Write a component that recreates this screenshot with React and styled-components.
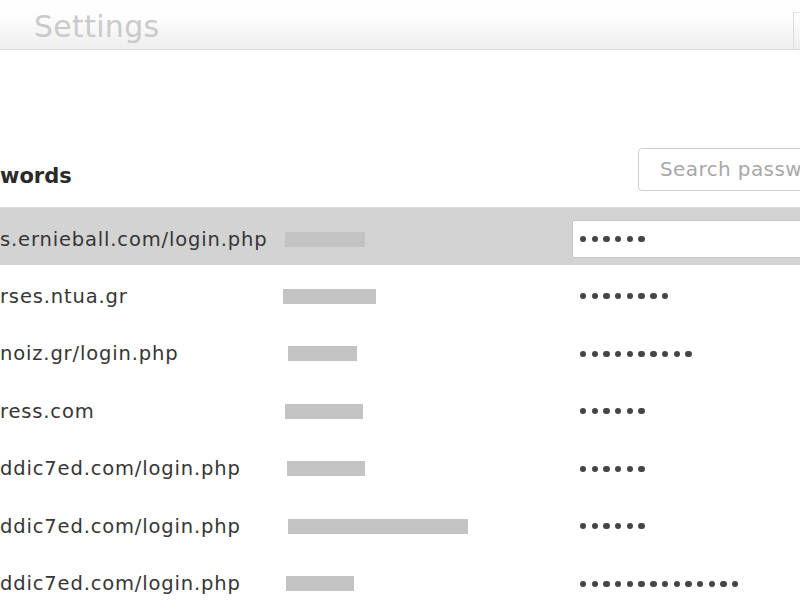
import React from 'react';
import styled, { createGlobalStyle } from 'styled-components';

const GlobalStyle = createGlobalStyle`
    html, body {
        margin: 0;
        padding: 0;
        background: #FFFFFF;
    }
    body {
        font-family: 'DejaVu Sans', 'Liberation Sans', sans-serif;
        color: #333333;
    }
`;

const Page = styled.div`
    width: 800px;
    height: 600px;
    overflow: hidden;
    background: #FFFFFF;
    display: flex;
    flex-direction: column;
`;

const Header = styled.header`
    height: 49px;
    flex: 0 0 49px;
    display: flex;
    align-items: flex-end;
    justify-content: space-between;
    background: linear-gradient(to bottom, #FFFFFF 0%, #FDFDFD 35%, #EEEEEE 100%);
    border-bottom: 1px solid #DCDCDC;
`;

const Title = styled.h1`
    margin: 0 0 5px 34px;
    font-size: 30px;
    font-weight: normal;
    letter-spacing: 0.3px;
    color: #CACACA;
`;

const Corner = styled.div`
    width: 6px;
    height: 36px;
    border-left: 1px solid #DDDDDD;
    border-top: 1px solid #E8E8E8;
`;

const Content = styled.main`
    padding-top: 97px;
    display: flex;
    flex-direction: column;
`;

const HeadingRow = styled.div`
    height: 44px;
    display: flex;
    align-items: center;
    justify-content: space-between;
    margin-right: -58px;
`;

const Heading = styled.h2`
    margin: 14px 0 0 0;
    font-size: 21px;
    font-weight: bold;
    color: #2A2A2A;
`;

const SearchBox = styled.div`
    width: 220px;
    height: 43px;
    box-sizing: border-box;
    border: 1px solid #CFCFCF;
    border-radius: 4px;
    padding-left: 21px;
    display: flex;
    align-items: center;
    font-size: 20px;
    letter-spacing: 0.4px;
    color: #A8A8A8;
    white-space: nowrap;
    overflow: hidden;
`;

const List = styled.div`
    margin-top: 16px;
    display: flex;
    flex-direction: column;
`;

const Row = styled.div`
    height: ${p => (p.selected ? '58px' : '57.5px')};
    padding-top: 5px;
    display: grid;
    grid-template-columns: 285px 287px 1fr;
    align-items: center;
    background: ${p => (p.selected ? '#D3D3D3' : 'transparent')};
    border-top: ${p => (p.selected ? '1px solid #DADADA' : 'none')};
    box-sizing: border-box;
`;

const Site = styled.div`
    font-size: 19.5px;
    letter-spacing: 0.85px;
    color: #363636;
    white-space: nowrap;
`;

const UserCell = styled.div`
    display: flex;
    align-items: center;
`;

const Blur = styled.div`
    height: 15px;
    background: #C3C3C3;
    filter: blur(0.6px);
`;

const PassCell = styled.div`
    height: ${p => (p.editing ? '38px' : 'auto')};
    margin-right: ${p => (p.editing ? '-10px' : '0')};
    box-sizing: border-box;
    display: flex;
    align-items: center;
    padding-left: 7px;
    background: ${p => (p.editing ? '#FFFFFF' : 'transparent')};
    border: ${p => (p.editing ? '1px solid #C6C6C6' : '1px solid transparent')};
    border-radius: 2px;
`;

const Dots = styled.div`
    display: flex;
    gap: 5.3px;
`;

const Dot = styled.span`
    width: 6.4px;
    height: 6.4px;
    border-radius: 50%;
    background: #454545;
`;

const passwords = [
    { site: 's.ernieball.com/login.php', user: 80, shift: 0, len: 6 },
    { site: 'rses.ntua.gr', user: 93, shift: -2, len: 8 },
    { site: 'noiz.gr/login.php', user: 69, shift: 3, len: 10 },
    { site: 'ress.com', user: 78, shift: 0, len: 6 },
    { site: 'ddic7ed.com/login.php', user: 78, shift: 2, len: 6 },
    { site: 'ddic7ed.com/login.php', user: 180, shift: 3, len: 6 },
    { site: 'ddic7ed.com/login.php', user: 68, shift: 1, len: 14 },
];

const App = () => (
    <Page>
        <GlobalStyle />
        <Header>
            <Title>Settings</Title>
            <Corner />
        </Header>
        <Content>
            <HeadingRow>
                <Heading>words</Heading>
                <SearchBox>Search passwords</SearchBox>
            </HeadingRow>
            <List>
                {passwords.map((item, i) => (
                    <Row key={i} selected={i === 0}>
                        <Site>{item.site}</Site>
                        <UserCell>
                            <Blur style={{ width: item.user, marginLeft: item.shift }} />
                        </UserCell>
                        <PassCell editing={i === 0}>
                            <Dots>
                                {Array.from({ length: item.len }, (_, d) => (
                                    <Dot key={d} />
                                ))}
                            </Dots>
                        </PassCell>
                    </Row>
                ))}
            </List>
        </Content>
    </Page>
);

export default App;
